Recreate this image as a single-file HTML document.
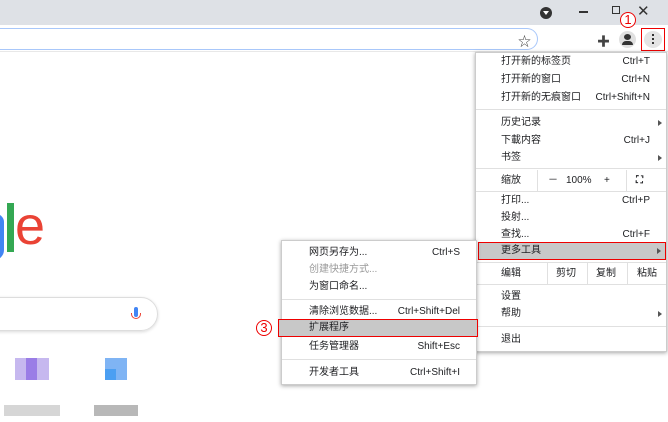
<!DOCTYPE html>
<html><head><meta charset="utf-8"><style>
*{margin:0;padding:0;box-sizing:border-box}
body{width:668px;height:422px;overflow:hidden;background:#fff;position:relative;font-family:"Liberation Sans","Noto Sans CJK SC",sans-serif;font-size:10px;color:#202124}
.abs{position:absolute}
.menu{position:absolute;background:#fff;box-shadow:0 1px 4px rgba(0,0,0,.35);border:1px solid #ccc}
.it{position:absolute;left:0;right:0;height:17px;line-height:17px}
.it .t{position:absolute}
.it .k{position:absolute;text-align:right}
.sep{position:absolute;left:0;right:0;height:1px;background:#e0e0e0}
.arr{position:absolute;right:4px;top:6px;width:0;height:0;border-left:4px solid #555;border-top:3px solid transparent;border-bottom:3px solid transparent}
.circ{position:absolute;width:16px;height:16px;border:1px solid #e00;border-radius:50%;color:#e00;font-size:13px;line-height:14px;text-align:center;background:#fff}
</style></head><body>
<div class="abs" style="left:0;top:0;width:668px;height:25px;background:#dee1e6"></div>
<div class="abs" style="left:540px;top:7px;width:12px;height:12px;border-radius:50%;background:#333"></div>
<div class="abs" style="left:543px;top:11px;width:0;height:0;border-left:3px solid transparent;border-right:3px solid transparent;border-top:4px solid #fff"></div>
<div class="abs" style="left:579px;top:11px;width:9px;height:1.5px;background:#333"></div>
<div class="abs" style="left:612px;top:6px;width:8px;height:8px;border:1.5px solid #333"></div>
<div class="abs" style="left:637px;top:2px;font-size:15px;color:#333">✕</div>
<div class="abs" style="left:-20px;top:28px;width:558px;height:22px;border:1.5px solid #a8c7fa;border-radius:11px;border-left:none"></div>
<div class="abs" style="left:518px;top:31px;font-size:13px;color:#444">☆</div>
<div class="abs" style="left:597px;top:31px;font-size:13px;color:#444">✚</div>
<div class="abs" style="left:619px;top:31px;width:17px;height:17px;border-radius:50%;background:#e0e0e0"></div>
<div class="abs" style="left:624px;top:34px;width:7px;height:6px;border-radius:50%;background:#333"></div>
<div class="abs" style="left:622px;top:41px;width:11px;height:4px;border-radius:4px 4px 0 0;background:#333"></div>
<div class="abs" style="left:641px;top:28px;width:24px;height:23px;border:1.5px solid #e00"></div>
<div class="abs" style="left:644px;top:31px;width:18px;height:17px;border-radius:50%;background:#e4e4e4"></div>
<div class="abs" style="left:652px;top:34px;width:2px;height:2px;background:#333;box-shadow:0 4px #333,0 8px #333"></div>
<div class="circ" style="left:620px;top:12px">1</div>
<div class="abs" style="left:0;top:51px;width:668px;height:1px;background:#e8e8e8"></div>
<div class="abs" style="left:-12px;top:214px;width:16px;height:46px;border:5px solid #4285f4;border-radius:0 8px 10px 0;border-left:none"></div>
<div class="abs" style="left:7px;top:203px;width:7px;height:49px;background:#34a853"></div>
<div class="abs" style="left:15px;top:194px;font-size:54px;line-height:64px;color:#ea4335;font-family:'Liberation Sans',sans-serif">e</div>
<div class="abs" style="left:-30px;top:297px;width:188px;height:34px;border:1px solid #ddd;border-radius:17px;box-shadow:0 1px 3px rgba(0,0,0,.15)"></div>
<div class="abs" style="left:134px;top:307px;width:4px;height:10px;background:#4285f4;border-radius:2px"></div>
<div class="abs" style="left:131px;top:313px;width:10px;height:6px;border:1.5px solid #ea4335;border-top:none;border-radius:0 0 5px 5px"></div>
<div class="abs" style="left:15px;top:358px;width:34px;height:22px;background:#c6b8ef"></div>
<div class="abs" style="left:26px;top:358px;width:11px;height:22px;background:#9a7de6"></div>
<div class="abs" style="left:105px;top:358px;width:22px;height:22px;background:#7fb4f4"></div>
<div class="abs" style="left:105px;top:369px;width:11px;height:11px;background:#4b9ff2"></div>
<div class="abs" style="left:4px;top:405px;width:56px;height:11px;background:#d6d6d6"></div>
<div class="abs" style="left:94px;top:405px;width:44px;height:11px;background:#b8b8b8"></div>

<div class="menu" style="left:475px;top:52px;width:192px;height:300px">
<div class="it" style="top:0"><span class="t" style="left:25px">打开新的标签页</span><span class="k" style="right:16px">Ctrl+T</span></div>
<div class="it" style="top:18px"><span class="t" style="left:25px">打开新的窗口</span><span class="k" style="right:16px">Ctrl+N</span></div>
<div class="it" style="top:36px"><span class="t" style="left:25px">打开新的无痕窗口</span><span class="k" style="right:16px">Ctrl+Shift+N</span></div>
<div class="sep" style="top:56px"></div>
<div class="it" style="top:61px"><span class="t" style="left:25px">历史记录</span><div class="arr"></div></div>
<div class="it" style="top:79px"><span class="t" style="left:25px">下載内容</span><span class="k" style="right:16px">Ctrl+J</span></div>
<div class="it" style="top:96px"><span class="t" style="left:25px">书签</span><div class="arr"></div></div>
<div class="sep" style="top:115px"></div>
<div class="it" style="top:117px;height:21px;line-height:21px"><span class="t" style="left:25px">缩放</span><span class="t" style="left:72px">－</span><span class="t" style="left:90px">100%</span><span class="t" style="left:128px">+</span><span class="t" style="left:160px;font-weight:bold">⛶</span></div>
<div class="abs" style="left:61px;top:117px;width:1px;height:21px;background:#e0e0e0"></div>
<div class="abs" style="left:150px;top:117px;width:1px;height:21px;background:#e0e0e0"></div>
<div class="sep" style="top:138px"></div>
<div class="it" style="top:139px"><span class="t" style="left:25px">打印...</span><span class="k" style="right:16px">Ctrl+P</span></div>
<div class="it" style="top:156px"><span class="t" style="left:25px">投射...</span></div>
<div class="it" style="top:173px"><span class="t" style="left:25px">查找...</span><span class="k" style="right:16px">Ctrl+F</span></div>
<div class="it" style="top:189px;height:18px;line-height:16px;background:#c8c8c8;border:1.5px solid #e00;left:2px"><span class="t" style="left:22px">更多工具</span><div class="arr" style="top:5px"></div></div>
<div class="sep" style="top:209px"></div>
<div class="it" style="top:210px;height:21px;line-height:21px"><span class="t" style="left:25px">编辑</span><span class="t" style="left:80px">剪切</span><span class="t" style="left:120px">复制</span><span class="t" style="left:161px">粘贴</span></div>
<div class="abs" style="left:71px;top:210px;width:1px;height:21px;background:#e0e0e0"></div>
<div class="abs" style="left:111px;top:210px;width:1px;height:21px;background:#e0e0e0"></div>
<div class="abs" style="left:151px;top:210px;width:1px;height:21px;background:#e0e0e0"></div>
<div class="sep" style="top:231px"></div>
<div class="it" style="top:235px"><span class="t" style="left:25px">设置</span></div>
<div class="it" style="top:252px"><span class="t" style="left:25px">帮助</span><div class="arr"></div></div>
<div class="sep" style="top:273px"></div>
<div class="it" style="top:278px"><span class="t" style="left:25px">退出</span></div>
</div>
<div class="circ" style="left:460px;top:244px">2</div>

<div class="menu" style="left:281px;top:240px;width:196px;height:145px">
<div class="it" style="top:3px"><span class="t" style="left:27px">网页另存为...</span><span class="k" style="right:16px">Ctrl+S</span></div>
<div class="it" style="top:20px;color:#999"><span class="t" style="left:27px">创建快捷方式...</span></div>
<div class="it" style="top:37px"><span class="t" style="left:27px">为窗口命名...</span></div>
<div class="sep" style="top:58px"></div>
<div class="it" style="top:62px"><span class="t" style="left:27px">清除浏览数据...</span><span class="k" style="right:16px">Ctrl+Shift+Del</span></div>
<div class="it" style="top:78px;height:18px;line-height:16px;background:#c8c8c8;border:1.5px solid #e00;left:-4px;right:-2px"><span class="t" style="left:30px">扩展程序</span></div>
<div class="it" style="top:97px"><span class="t" style="left:27px">任务管理器</span><span class="k" style="right:16px">Shift+Esc</span></div>
<div class="sep" style="top:118px"></div>
<div class="it" style="top:123px"><span class="t" style="left:27px">开发者工具</span><span class="k" style="right:16px">Ctrl+Shift+I</span></div>
</div>
<div class="circ" style="left:256px;top:320px">3</div>
</body></html>
